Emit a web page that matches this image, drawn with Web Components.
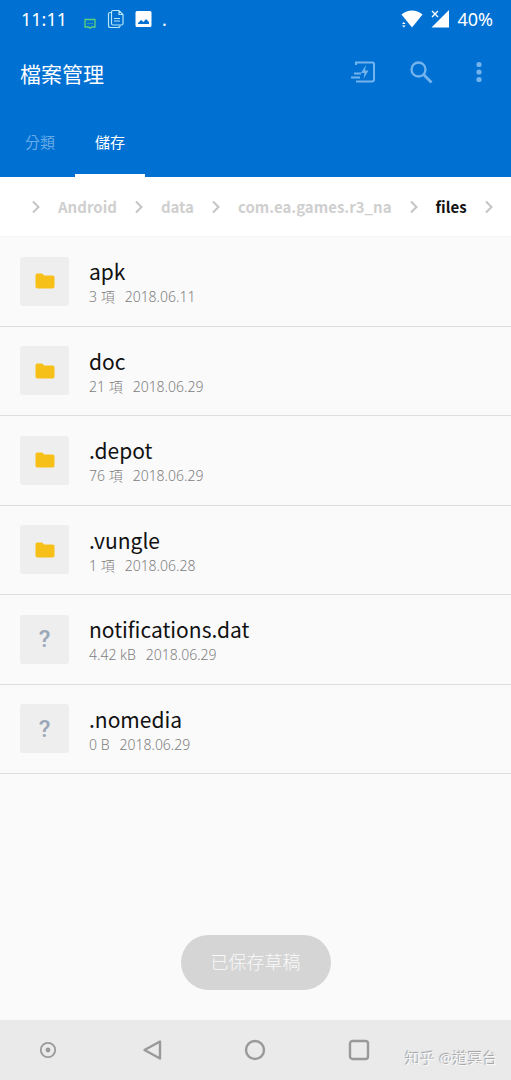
<!DOCTYPE html>
<html lang="zh-Hant">
<head>
<meta charset="utf-8">
<meta name="viewport" content="width=device-width, initial-scale=1">
<title>檔案管理</title>
<style>
  html, body { margin: 0; }
  body { font-family: "Noto Sans", "Noto Sans CJK TC", sans-serif; background: #fafafa; color: #111; }
</style>
</head>
<body>
<file-manager></file-manager>

<script>
const define = (name, html) => {
  const template = document.createElement('template');
  template.innerHTML = `<style>*{box-sizing:border-box}</style>` + html;
  customElements.define(name, class extends HTMLElement {
    constructor() {
      super();
      this.attachShadow({ mode: 'open' }).append(template.content.cloneNode(true));
    }
  });
};

define('status-bar', `
<style>
  :host { display: flex; align-items: center; height: 38px; padding: 0 18px 0 21px; font-size: 18px; line-height: 24px; color: #fff; }
  svg { display: block; }
  .notes { display: flex; align-items: center; gap: 9px; margin-left: 10px; }
  .system { display: flex; align-items: center; gap: 8px; margin-left: auto; }
</style>
<span>11:11</span>
<div class="notes">
  <svg width="20" height="20" viewBox="0 0 20 20" fill="none"><path d="M4 10V6a4 4 0 0 1 8 0v3" stroke="#0b68dc" stroke-width="1.5"/><path d="M8 10.500h10v7.500H14.500l-1.500 1.300L11.500 18H8z" stroke="#5ed07c" stroke-width="1.300"/><path d="M10.500 14.500h5" stroke="#5ed07c" stroke-dasharray="1 1"/></svg>
  <svg width="20" height="20" viewBox="0 0 18 20" fill="none" stroke="#b5e6f5" stroke-width="1.200"><path d="M6 1.500h6l4 4v9a1.500 1.500 0 0 1-1.500 1.500H6A1.500 1.500 0 0 1 4.500 14.500V3A1.500 1.500 0 0 1 6 1.500zM12 1.500v4h4"/><path d="M4.500 3.500H3A1.500 1.500 0 0 0 1.500 5v11.500A2 2 0 0 0 3.500 18.500H11a2 2 0 0 0 2-2"/><path d="M7 9.500h6M7 12h6"/></svg>
  <svg width="18" height="18" viewBox="0 0 18 18"><path fill="#fff" fill-rule="evenodd" d="M2 1h13a1.500 1.500 0 0 1 1.500 1.500v13A1.500 1.500 0 0 1 15 17H2A1.500 1.500 0 0 1 .5 15.500v-13A1.500 1.500 0 0 1 2 1zM3 14h11v-2l-3-3-2.500 3L6 10l-3 3z"/></svg>
  <span>.</span>
</div>
<div class="system">
  <svg width="22" height="20" viewBox="0 0 22 20" fill="#fff"><path d="M.5 5.500C7 0 15 0 21.500 5.500L11 18.500z"/><path d="M1 15l1.800-2 1.800 2zM1 16.500h3.600L2.800 18.500z"/></svg>
  <svg width="18" height="20" viewBox="0 0 18 20"><path fill="#fff" d="M18 1v17.500H.5L8 11z"/><path d="M1 2l6 6M7 2L1 8" stroke="#fff" stroke-width="1.400"/></svg>
  <span>40%</span>
</div>`);

define('app-toolbar', `
<style>
  :host { display: flex; align-items: center; height: 72px; padding: 0 12px 0 20px; color: #fff; }
  h1 { margin: 0 auto 0 0; font-size: 21px; line-height: 32px; font-weight: 400; }
  .actions { display: flex; gap: 18px; padding-bottom: 4px; }
  button { display: grid; place-items: center; width: 40px; height: 40px; padding: 0; border: 0; background: none; color: #74b4ec; }
  svg { display: block; }
</style>
<h1><slot></slot></h1>
<div class="actions">
  <button aria-label="快速傳送"><svg width="26" height="24" viewBox="0 0 26 24" fill="none" stroke="currentColor" stroke-width="2"><path d="M6 5V2.500H22.500a1.500 1.500 0 0 1 1.500 1.500v15.500a2 2 0 0 1-2 2H6"/><path d="M4 13.500h7M1 17.500h9"/><path d="M16 5l-5 8h3.500l-1 6 5-8.500h-3.500z" fill="currentColor" stroke="none"/></svg></button>
  <button aria-label="搜尋"><svg width="24" height="24" viewBox="0 0 24 24" fill="none" stroke="currentColor"><circle cx="9.500" cy="9.500" r="7" stroke-width="2.300"/><path d="M14.500 14.500l8 8" stroke-width="2.800"/></svg></button>
  <button aria-label="更多"><svg width="6" height="22" viewBox="0 0 6 22" fill="currentColor"><circle cx="3" cy="3.500" r="2.600"/><circle cx="3" cy="11" r="2.600"/><circle cx="3" cy="18.500" r="2.600"/></svg></button>
</div>`);

define('app-tabs', `
<style>
  :host { display: flex; height: 67px; padding-left: 5px; }
  ::slotted(button) { padding: 0 20px; border: 0; border-bottom: 3px solid transparent; background: none; color: #66abe8; font: inherit; font-size: 15px; line-height: 24px; }
  ::slotted(button[aria-selected="true"]) { color: #fff; border-bottom-color: #fff; }
</style>
<slot></slot>`);

define('path-bar', `
<style>
  :host { display: flex; align-items: center; height: 60px; padding-left: 31px; background: #fff; border-bottom: 1px solid #f5f5f5; overflow: hidden; white-space: nowrap; font-family: "Noto Sans CJK TC", sans-serif; font-size: 15px; line-height: 24px; font-weight: 700; color: #cfcfcf; box-sizing: border-box; }
</style>
<slot></slot>`);

define('path-crumb', `
<style>
  :host { display: flex; align-items: center; }
  svg { display: block; flex: none; margin-right: 17px; }
  a { color: inherit; text-decoration: none; margin-right: 17px; }
  :host([current]) a { color: #111; }
  :host([end]) a { display: none; }
</style>
<svg width="10" height="14" viewBox="0 0 10 14" fill="none" stroke="#c4c4c4" stroke-width="2"><path d="M2 1.500L7.500 7 2 12.500"/></svg>
<a href="#"><slot></slot></a>`);

define('file-list', `
<style>
  :host { display: grid; grid-auto-rows: 1fr; min-height: 537px; }
</style>
<slot></slot>`);

define('file-item', `
<style>
  :host { display: flex; align-items: center; gap: 20px; padding: 0 20px; border-bottom: 1px solid #dedede; box-sizing: border-box; }
  .thumb { display: grid; place-items: center; flex: none; width: 49px; height: 49px; border-radius: 3px; background: #eee; }
  .mark { display: none; color: #9aa7b8; font: 500 24px/28px Roboto, sans-serif; }
  :host([kind="unknown"]) svg { display: none; }
  :host([kind="unknown"]) .mark { display: block; }
  .text { padding-top: 4px; }
  .name { font-family: "Noto Sans CJK TC", sans-serif; font-size: 21px; line-height: 28px; }
  .meta { display: flex; gap: 10px; font-size: 14px; line-height: 24px; font-weight: 300; color: #808080; }
</style>
<div class="thumb">
  <svg width="20" height="16" viewBox="0 0 20 16"><path fill="#f7c019" d="M2.200.5h5l2 2h8.300a2 2 0 0 1 2 2V13.500a2 2 0 0 1-2 2H2.500a2 2 0 0 1-2-2V2.200A1.700 1.700 0 0 1 2.200.5z"/></svg>
  <span class="mark">?</span>
</div>
<div class="text">
  <div class="name"><slot></slot></div>
  <div class="meta"><span><slot name="size"></slot></span><span><slot name="date"></slot></span></div>
</div>`);

define('toast-note', `
<style>
  :host { position: absolute; left: 50%; bottom: 30px; transform: translateX(-50%); padding: 14px 30px; border-radius: 28px; background: #d5d5d5; color: #fafafa; font-size: 18px; line-height: 27px; font-weight: 300; white-space: nowrap; }
</style>
<slot></slot>`);

define('nav-bar', `
<style>
  :host { display: block; position: relative; height: 60px; background: #eaeaea; overflow: hidden; }
  nav { display: grid; grid-template-columns: repeat(5, 1fr); height: 100%; margin: 0 -4px; }
  button { display: grid; place-items: center; padding: 0; border: 0; background: none; color: #999; }
  svg { display: block; }
  .credit { position: absolute; right: 13px; bottom: 10px; font-size: 15px; line-height: 24px; color: #f8f8f8; text-shadow: -1px -1px 1px #999; }
</style>
<nav>
  <button aria-label="隱藏導覽列"><svg width="18" height="18" viewBox="0 0 18 18"><circle cx="9" cy="9" r="7.200" fill="none" stroke="currentColor" stroke-width="1.800"/><circle cx="9" cy="9" r="2.400" fill="currentColor"/></svg></button>
  <button aria-label="返回"><svg width="20" height="22" viewBox="0 0 20 22" fill="none" stroke="currentColor" stroke-width="2.400" stroke-linejoin="round"><path d="M18 2.500v17L2.500 11z"/></svg></button>
  <button aria-label="主畫面"><svg width="22" height="22" viewBox="0 0 22 22" fill="none" stroke="currentColor" stroke-width="2.400"><circle cx="11" cy="11" r="9"/></svg></button>
  <button aria-label="最近使用"><svg width="22" height="22" viewBox="0 0 22 22" fill="none" stroke="currentColor" stroke-width="2.400"><rect x="2" y="2" width="18" height="18" rx="2.500"/></svg></button>
</nav>
<span class="credit"><slot></slot></span>`);

define('file-manager', `
<style>
  :host { display: flex; flex-direction: column; min-height: 100vh; }
  header { background: #0070d2; }
  main { flex: 1; position: relative; padding-bottom: 90px; }
</style>
<header>
  <status-bar></status-bar>
  <app-toolbar>檔案管理</app-toolbar>
  <app-tabs role="tablist">
    <button role="tab" aria-selected="false">分類</button>
    <button role="tab" aria-selected="true">儲存</button>
  </app-tabs>
</header>
<path-bar>
  <path-crumb>Android</path-crumb>
  <path-crumb>data</path-crumb>
  <path-crumb>com.ea.games.r3_na</path-crumb>
  <path-crumb current>files</path-crumb>
  <path-crumb end></path-crumb>
</path-bar>
<main>
  <file-list>
    <file-item>apk<span slot="size">3 項</span><span slot="date">2018.06.11</span></file-item>
    <file-item>doc<span slot="size">21 項</span><span slot="date">2018.06.29</span></file-item>
    <file-item>.depot<span slot="size">76 項</span><span slot="date">2018.06.29</span></file-item>
    <file-item>.vungle<span slot="size">1 項</span><span slot="date">2018.06.28</span></file-item>
    <file-item kind="unknown">notifications.dat<span slot="size">4.42 kB</span><span slot="date">2018.06.29</span></file-item>
    <file-item kind="unknown">.nomedia<span slot="size">0 B</span><span slot="date">2018.06.29</span></file-item>
  </file-list>
  <toast-note role="status">已保存草稿</toast-note>
</main>
<nav-bar>知乎 @道冥台</nav-bar>`);
</script>
</body>
</html>
